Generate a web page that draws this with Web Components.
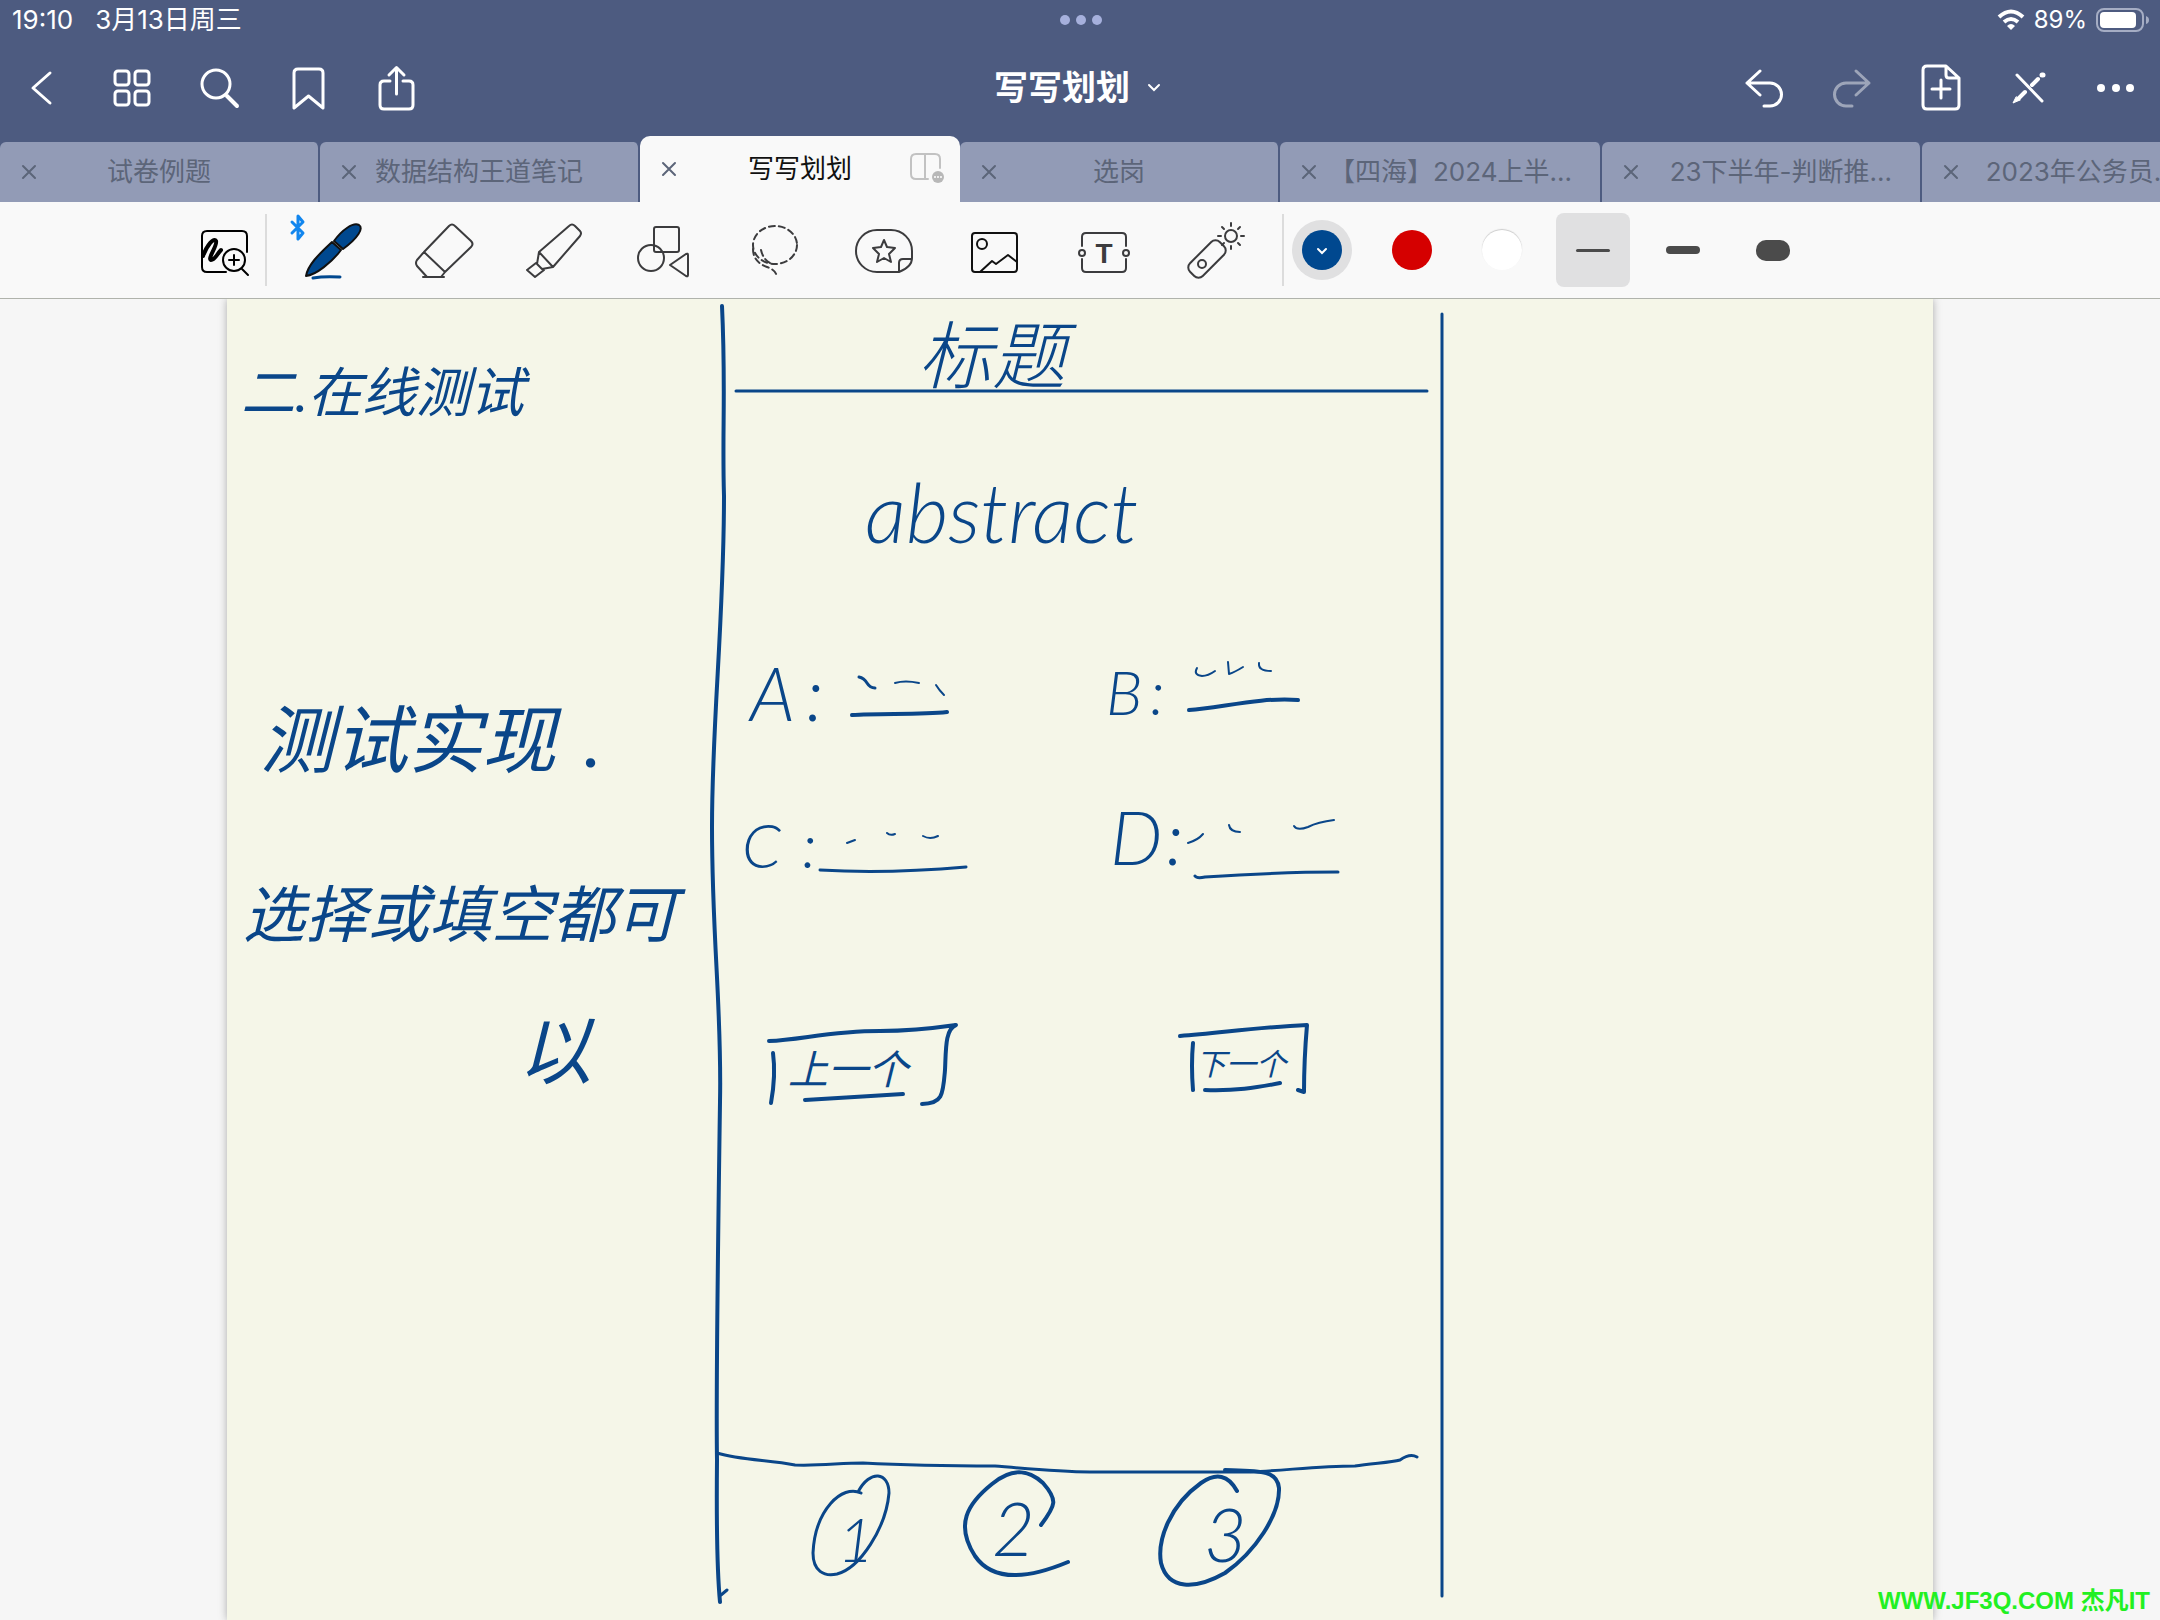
<!DOCTYPE html>
<html lang="zh-CN">
<head>
<meta charset="utf-8">
<title>写写划划</title>
<style>
  html, body { margin: 0; min-height: 100%; background: #f6f6f6; }
  body { font-family: Inter, "Noto Sans CJK SC", sans-serif; }
</style>
</head>
<body>
<note-app></note-app>

<script>
const ICONS = {
  back: `<path d="M34 13 17 28 34 43" stroke-width="3"/>`,
  grid: `<rect x="11" y="11" width="14" height="14" rx="3"/><rect x="31" y="11" width="14" height="14" rx="3"/><rect x="11" y="31" width="14" height="14" rx="3"/><rect x="31" y="31" width="14" height="14" rx="3"/>`,
  search: `<circle cx="24" cy="24" r="14"/><path d="M35 36 45 46" stroke-width="4"/>`,
  bookmark: `<path d="M14 48V13q0-4 4-4H39q4 0 4 4V48L28.5 36Z"/>`,
  share: `<path d="M22 21H16q-4 0-4 4V45q0 4 4 4H41q4 0 4-4V25q0-4-4-4H35M28.500 34V8M21 15l7.500-7.500L36 15"/>`,
  undo: `<path d="M24 11 11 23 24 35M11 23H34a11.500 11.500 0 0 1 0 23H28" stroke-width="3"/>`,
  redo: `<g opacity=".45"><path d="M32 11 45 23 32 35M45 23H22a11.500 11.500 0 0 0 0 23H28" stroke-width="3"/></g>`,
  add: `<path d="M34 6H15q-4 0-4 4V45q0 4 4 4H43q4 0 4-4V18ZM34 6V15q0 3 3 3H47M29 20V38M20 29H38"/>`,
  pencil: `<path d="M17 15 42 41" stroke-width="3"/><path d="M38 19 32 25M25 32 18 39" stroke-width="4"/><path d="M16 37 13 43 20 40Z" fill="#fff" stroke-width="1"/><path d="M42 15h1" stroke-width="5"/>`,
  more: `<g fill="#fff" stroke="none"><circle cx="13" cy="28" r="4"/><circle cx="28" cy="28" r="4"/><circle cx="42" cy="28" r="4"/></g>`,

  zoom: `<g stroke="#000"><path d="M63 42V26q0-5-5-5H23q-5 0-5 5V57q0 5 5 5H42"/><path d="M19 46C23 35 30 27 32 31 34 35 23 49 27 50 31 50 33 44 37 40" stroke-width="4"/><circle cx="50" cy="50" r="11"/><path d="M50 45V55M45 50H55M58 59 64 65"/></g>`,
  pen: `<path d="M-2 12 9 23 4 29V6L9 12-2 23" stroke="#1286ee" stroke-width="3"/><g fill="#00488f" stroke="#111"><path d="M12 66C14 55 24 45 38 32L47 40C38 52 22 65 12 66Z"/><path d="M40 31C48 20 59 12 65 15 70 18 64 28 49 39Z"/></g><path d="M19 68Q30 66 46 67" stroke="#00488f" stroke-width="3"/>`,
  eraser: `<path d="M20 42 45 16q3-3 6 0L67 31q3 3 0 6L41 62ZM20 42 13 50q-2 3 0 6L23 67H37L41 62M19 67H40"/>`,
  marker: `<path d="M25 42 55 16q3-3 6 0L66 21q2 2 0 5L39 57ZM25 42 23 54 28 59 39 57M22 53 13 60 21 67 30 60"/>`,
  shapes: `<rect x="30" y="17" width="25" height="25" rx="2"/><circle cx="27" cy="48" r="13"/><path d="M46 55 62 44q2-1 2 1V65q0 2-2 1Z"/>`,
  lasso: `<g stroke-dasharray="6 4"><ellipse cx="41" cy="35" rx="22" ry="19"/><path d="M19 39Q19 52 33 57 42 60 43 67M27 40Q29 49 36 53"/></g>`,
  sticker: `<path d="M55 62H33a21 21 0 0 1 0-42H47A21 21 0 0 1 68 41V48Q68 57 55 62V53q0-4 4-4H68"/><path d="m40 30 3 7 8 1-6 6 2 8-7-4-7 4 2-8-6-6 8-1Z"/>`,
  image: `<g stroke="#111"><rect x="18" y="23" width="45" height="39" rx="3"/><circle cx="28" cy="34" r="5"/><path d="M26 62 38 51 42 54 54 45 63 52"/></g>`,
  text: `<path d="M18 36V27q0-4 4-4H58q4 0 4 4V36M62 49V58q0 4-4 4H22q-4 0-4-4V49"/><circle cx="18" cy="43" r="3"/><circle cx="62" cy="43" r="3"/><text x="40" y="53" text-anchor="middle" font-size="28" font-weight="700" fill="#3c3c3e" stroke="none">T</text>`,
  laser: `<rect x="12" y="40" width="42" height="18" rx="6" transform="rotate(-45 33 49)"/><circle cx="28" cy="54" r="4"/><circle cx="57" cy="26" r="6"/><path d="M57 16V13M57 36V39M47 26H44M67 26H70M50 19 48 17M64 19 66 17M64 33 66 35M50 33 48 35"/>`
};

class UiIcon extends HTMLElement {
  constructor() {
    super();
    this.attachShadow({ mode: "open" });
  }

  connectedCallback() {
    const size = this.getAttribute("size") || "56";
    this.shadowRoot.innerHTML = `
      <style>
        :host { display: block; }
        svg { display: block; overflow: visible; fill: none; stroke: currentColor; stroke-width: 3; stroke-linecap: round; stroke-linejoin: round; }
        :host([size="80"]) svg { stroke-width: 2; }
      </style>
      <svg width="${size}" height="${size}" viewBox="0 0 ${size} ${size}" aria-hidden="true">${ICONS[this.getAttribute("name")]}</svg>
    `;
  }
}
customElements.define("ui-icon", UiIcon);

class StatusBar extends HTMLElement {
  constructor() {
    super();
    this.attachShadow({ mode: "open" });
    this.shadowRoot.innerHTML = `
      <style>
        :host { display: grid; grid-template-columns: 1fr auto 1fr; align-items: center; height: 40px; padding: 0 10px 0 12px; color: #fff; font-size: 24px; line-height: 40px; }
        .left { display: flex; gap: 22px; font-size: 26px; }
        .right { display: flex; justify-content: flex-end; align-items: center; gap: 9px; }
        svg { display: block; }
      </style>
      <div class="left"><span>19:10</span><span>3月13日周三</span></div>
      <svg width="44" height="12" fill="#a6b0dc"><circle cx="6" cy="6" r="5"/><circle cx="22" cy="6" r="5"/><circle cx="38" cy="6" r="5"/></svg>
      <div class="right">
        <svg width="28" height="22" viewBox="0 0 28 22" fill="none" stroke="#fff" stroke-width="4"><path d="M2 8Q14-3 26 8M7 13Q14 7 21 13"/><path d="M10 17Q14 13 18 17L14 21Z" fill="#fff" stroke="none"/></svg>
        <span>89%</span>
        <svg width="54" height="24" viewBox="0 0 54 24"><rect x="1" y="1" width="46" height="22" rx="7" fill="none" stroke="#a5adc4" stroke-width="2"/><rect x="4" y="4" width="36" height="16" rx="4" fill="#fff"/><path d="M50 8q3 1 3 4t-3 4Z" fill="#a5adc4"/></svg>
      </div>
    `;
  }
}
customElements.define("status-bar", StatusBar);

class NavBar extends HTMLElement {
  constructor() {
    super();
    this.attachShadow({ mode: "open" });
    const buttons = (list) => list.map(([name, label]) =>
      `<button aria-label="${label}"><ui-icon name="${name}"></ui-icon></button>`).join("");
    this.shadowRoot.innerHTML = `
      <style>
        :host { display: grid; grid-template-columns: 1fr auto 1fr; align-items: center; height: 96px; color: #fff; }
        div { display: flex; }
        .end { justify-content: flex-end; }
        button { display: flex; justify-content: center; align-items: center; width: 88px; height: 88px; padding: 0; border: 0; background: none; color: inherit; }
        h1 { display: flex; align-items: center; gap: 16px; margin: 0; padding-right: 4px; font-size: 34px; line-height: 48px; font-weight: 700; }
      </style>
      <div>${buttons([["back", "返回"], ["grid", "缩略图"], ["search", "搜索"], ["bookmark", "书签"], ["share", "分享"]])}</div>
      <h1>写写划划<svg width="16" height="12" fill="none" stroke="#fff" stroke-width="2" stroke-linecap="round"><path d="M3 3 8 8 13 3"/></svg></h1>
      <div class="end">${buttons([["undo", "撤销"], ["redo", "重做"], ["add", "添加页面"], ["pencil", "只读模式"], ["more", "更多"]])}</div>
    `;
  }
}
customElements.define("nav-bar", NavBar);

class DocTab extends HTMLElement {
  constructor() {
    super();
    this.attachShadow({ mode: "open" });
    this.shadowRoot.innerHTML = `
      <style>
        :host { box-sizing: border-box; flex: 0 0 320px; display: grid; grid-template-columns: minmax(52px, 1fr) auto minmax(20px, 1fr); align-items: center; height: 60px; border-right: 2px solid #4d5b80; border-radius: 6px 6px 0 0; background: #929bb6; color: #5c6579; font-size: 26px; line-height: 36px; white-space: nowrap; }
        :host([clipped]) { grid-template-columns: 1fr auto 28px; }
        :host([active]) { height: 66px; border-right: 0; border-radius: 10px 10px 0 0; background: #f9f9f9; color: #111; }
        button { width: 40px; height: 40px; margin-left: 9px; padding: 0; border: 0; background: none; color: #5c6579; }
        svg { display: block; margin: auto; fill: none; stroke: currentColor; stroke-width: 2; stroke-linecap: round; }
        .split { display: none; margin: 0 14px 0 auto; color: #c2c2c2; }
        :host([active]) .split { display: block; }
      </style>
      <button aria-label="关闭"><svg width="16" height="16"><path d="M2 2 14 14M14 2 2 14"/></svg></button>
      <slot></slot>
      <svg class="split" width="36" height="32"><path d="M30 15V6q0-5-5-5H6Q1 1 1 6V21q0 5 5 5H18M15 1V26"/><circle cx="28" cy="24" r="6" fill="#b8b8b8" stroke="none"/><path d="M25 24h0M28 24h0M31 24h0" stroke="#fff"/></svg>
    `;
  }
}
customElements.define("doc-tab", DocTab);

class TabStrip extends HTMLElement {
  constructor() {
    super();
    this.attachShadow({ mode: "open" });
    this.shadowRoot.innerHTML = `
      <style>
        :host { display: flex; align-items: flex-end; height: 66px; overflow: hidden; }
      </style>
      <slot></slot>
    `;
  }
}
customElements.define("tab-strip", TabStrip);

class ToolBar extends HTMLElement {
  constructor() {
    super();
    this.attachShadow({ mode: "open" });
    const tools = [["pen", "钢笔"], ["eraser", "橡皮擦"], ["marker", "荧光笔"], ["shapes", "形状"], ["lasso", "套索"],
      ["sticker", "贴纸"], ["image", "图片"], ["text", "文本"], ["laser", "激光笔"]];
    this.shadowRoot.innerHTML = `
      <style>
        :host { display: flex; align-items: center; height: 96px; padding-left: 183px; border-bottom: 1px solid #b0b3ac; background: #f9f9f9; color: #3c3c3e; }
        div { display: flex; align-items: center; }
        button { display: flex; justify-content: center; align-items: center; padding: 0; border: 0; background: none; color: inherit; }
        .tools { padding: 0 13px 0 12px; }
        .tools button { width: 110px; height: 80px; }
        .zoom { width: 82px; height: 80px; }
        .line { width: 2px; height: 72px; background: #dcdcdc; }
        .colors { gap: 30px; padding: 0 24px 0 8px; }
        .colors button { width: 60px; height: 60px; border-radius: 50%; }
        .colors .on { background: #e0e0e1; }
        .dot { display: flex; align-items: center; justify-content: center; width: 40px; height: 40px; border-radius: 50%; background: var(--c); }
        .white { box-shadow: 0 -1px 1px #ccc; }
        .widths { gap: 16px; }
        .widths button { width: 74px; height: 74px; border-radius: 8px; }
        .widths .on { background: #e0e0e1; }
        .bar { width: 34px; height: var(--h); border-radius: 10px; background: #4b4b4b; }
      </style>
      <button class="zoom" aria-label="缩放窗口"><ui-icon name="zoom" size="80"></ui-icon></button>
      <span class="line"></span>
      <div class="tools">${tools.map(([name, label]) => `<button aria-label="${label}"><ui-icon name="${name}" size="80"></ui-icon></button>`).join("")}</div>
      <span class="line"></span>
      <div class="colors">
        <button class="on" aria-label="蓝色"><span class="dot" style="--c:#00488f"><svg width="14" height="12" fill="none" stroke="#fff" stroke-width="2" stroke-linecap="round"><path d="M3 5 7 9 11 5"/></svg></span></button>
        <button aria-label="红色"><span class="dot" style="--c:#d50000"></span></button>
        <button aria-label="白色"><span class="dot white" style="--c:#fff"></span></button>
      </div>
      <div class="widths">
        <button class="on" aria-label="细"><span class="bar" style="--h:3px"></span></button>
        <button aria-label="中"><span class="bar" style="--h:8px"></span></button>
        <button aria-label="粗"><span class="bar" style="--h:21px"></span></button>
      </div>
    `;
  }
}
customElements.define("tool-bar", ToolBar);

class NotePage extends HTMLElement {
  constructor() {
    super();
    this.attachShadow({ mode: "open" });
    this.shadowRoot.innerHTML = `
      <style>
        :host { display: block; background: #f5f6e8; box-shadow: 0 0 8px #aaa; }
        svg { display: block; width: 100%; height: auto; }
        .ink { fill: none; stroke: #0a4689; stroke-width: 4; stroke-linecap: round; stroke-linejoin: round; }
        .thin { stroke-width: 3; }
        .words { fill: #0a4689; font-family: Lato, "Noto Sans CJK SC", sans-serif; font-style: italic; font-weight: 300; }
        .firm { font-weight: 400; }
      </style>
      <svg viewBox="227 299 1706 1321">
        <!-- frame of the sketched screen -->
        <g class="ink">
          <path d="M722 306C726 390 722 430 724 496C724 620 712 720 712 827C712 940 722 1010 720 1102C718 1240 716 1400 717 1460Q716 1560 720 1602"/>
          <path class="thin" d="M721 1595 727 1590M1442 314V1596"/>
          <path class="thin" d="M736 391H1427"/>
          <path class="thin" d="M717 1453C740 1460 770 1460 795 1465C820 1466 840 1463 863 1463C920 1466 960 1466 995 1466C1040 1470 1060 1472 1090 1472H1250C1290 1470 1320 1466 1355 1466C1370 1463 1390 1463 1400 1460Q1410 1453 1417 1457"/>
        </g>
        <!-- answer lines -->
        <g class="ink">
          <path d="M852 715C880 713 920 715 947 712M1189 710C1220 708 1260 697 1298 700"/>
          <path class="thin" d="M820 870C870 873 920 871 966 867M1195 876Q1197 879 1205 877C1250 874 1290 872 1338 872"/>
          <path class="thin" d="M859 677Q864 678 867 683T875 688"/>
          <g stroke-width="2">
            <path d="M895 683Q905 680 919 683M936 685Q939 690 944 695"/>
            <path d="M1197 668Q1193 675 1202 676 1208 676 1215 671M1228 662 1229 674Q1235 672 1243 667M1259 663Q1258 671 1271 671"/>
            <path d="M847 843 855 840M887 833Q890 836 895 834M923 836Q930 840 938 836M1188 843Q1198 840 1203 834M1229 825Q1230 832 1240 832M1294 826Q1297 831 1308 827 1318 822 1334 820"/>
          </g>
        </g>
        <!-- previous and next boxes -->
        <g class="ink">
          <path d="M769 1041C800 1040 830 1031 880 1031C910 1031 935 1028 956 1025C945 1029 946 1050 945 1070C943 1094 943 1104 922 1104M773 1053Q776 1075 771 1103M805 1100C840 1098 870 1096 903 1094"/>
          <path d="M1180 1036C1220 1033 1260 1027 1307 1025Q1304 1060 1304 1092L1298 1090M1193 1043Q1191 1065 1193 1090M1205 1090C1235 1091 1255 1088 1280 1083"/>
        </g>
        <!-- circles round the page numbers -->
        <g class="ink">
          <path class="thin" d="M861 1493C842 1484 815 1510 813 1553C813 1571 824 1577 837 1574C860 1568 886 1528 889 1493C889 1472 870 1469 858 1492"/>
          <path d="M1068 1562C1020 1582 990 1578 975 1556C955 1525 967 1504 992 1484C1015 1465 1031 1472 1043 1483C1058 1500 1056 1505 1041 1525"/>
          <path d="M1237 1491Q1224 1467 1201 1483C1170 1505 1157 1540 1161 1563C1168 1590 1195 1590 1225 1573C1255 1552 1280 1515 1279 1488C1277 1470 1260 1471 1225 1470"/>
        </g>
        <g class="words">
          <g class="firm">
            <text x="241" y="412" font-size="54">二.在线测试</text>
            <text x="260" y="767" font-size="74">测试实现<tspan x="584">.</tspan></text>
            <text x="243" y="937" font-size="62">选择或填空都可</text>
            <text x="518" y="1078" font-size="74">以</text>
            <text x="788" y="1084" font-size="40">上一个</text>
            <text x="1196" y="1075" font-size="30">下一个</text>
          </g>
          <text x="918" y="383" font-size="74">标题</text>
          <text x="865" y="543" font-size="82">abstract</text>
          <text x="750" y="721" font-size="74">A<tspan x="806">:</tspan></text>
          <text x="1106" y="715" font-size="62">B<tspan x="1150">:</tspan></text>
          <text x="742" y="868" font-size="62">C<tspan x="802">:</tspan></text>
          <text x="1110" y="865" font-size="74">D<tspan x="1166">:</tspan></text>
          <text x="838" y="1562" font-size="62">1</text>
          <text x="992" y="1556" font-size="74">2</text>
          <text x="1204" y="1562" font-size="74">3</text>
        </g>
      </svg>
    `;
  }
}
customElements.define("note-page", NotePage);

class NoteApp extends HTMLElement {
  constructor() {
    super();
    this.attachShadow({ mode: "open" });
    this.shadowRoot.innerHTML = `
      <style>
        :host { position: relative; display: flex; flex-direction: column; min-height: 100vh; overflow: hidden; }
        header { background: #4d5b80; }
        main { flex: 1; padding: 0 227px; overflow: hidden; }
        .mark { position: absolute; right: 10px; bottom: 4px; color: #22f022; font-family: "Liberation Sans", "Noto Sans CJK SC", sans-serif; font-size: 24px; line-height: 30px; font-weight: 700; }
      </style>
      <header>
        <status-bar></status-bar>
        <nav-bar></nav-bar>
        <tab-strip>
          <doc-tab>试卷例题</doc-tab>
          <doc-tab>数据结构王道笔记</doc-tab>
          <doc-tab active>写写划划</doc-tab>
          <doc-tab>选岗</doc-tab>
          <doc-tab clipped>【四海】2024上半...</doc-tab>
          <doc-tab clipped>23下半年-判断推...</doc-tab>
          <doc-tab>2023年公务员...</doc-tab>
        </tab-strip>
      </header>
      <tool-bar></tool-bar>
      <main><note-page></note-page></main>
      <span class="mark">WWW.JF3Q.COM 杰凡IT</span>
    `;
  }
}
customElements.define("note-app", NoteApp);
</script>
</body>
</html>
